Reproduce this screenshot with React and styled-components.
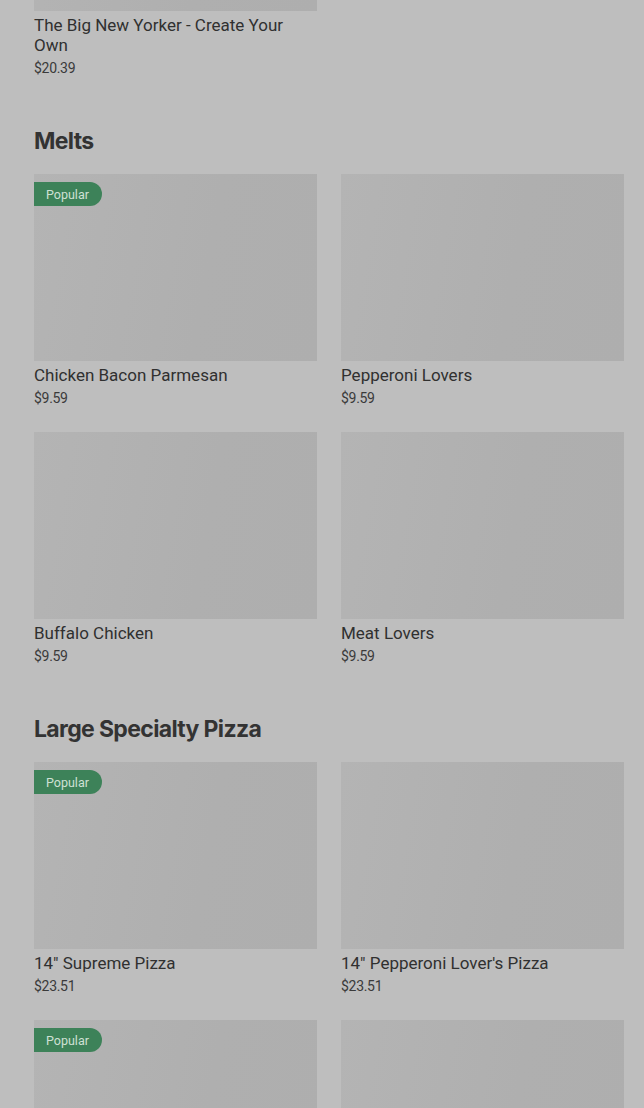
import React from 'react';
import styled, { createGlobalStyle } from 'styled-components';

const GlobalStyle = createGlobalStyle`
  html, body {
    margin: 0;
    padding: 0;
    background: #bebebe;
    overflow: hidden;
  }
  body {
    font-family: Roboto, "Liberation Sans", sans-serif;
    color: #353535;
  }
`;

const Page = styled.main`
  padding: 0 20px 0 34px;
  margin-top: -176px;
`;

const Section = styled.section`
  & + & {
    margin-top: 47px;
  }
`;

const Heading = styled.h2`
  margin: 0 0 17px;
  font-family: Inter, "Liberation Sans", sans-serif;
  font-size: 23px;
  line-height: 32px;
  font-weight: 700;
  letter-spacing: -0.65px;
  color: #333;
`;

const Grid = styled.div`
  display: grid;
  grid-template-columns: 283px 283px;
  column-gap: 24px;
  row-gap: 24px;
`;

const Card = styled.div`
  display: flex;
  flex-direction: column;
`;

const Thumb = styled.div`
  position: relative;
  height: 187px;
  background: linear-gradient(100deg, #b4b4b4 0%, #afafaf 60%, #aeaeae 100%);
`;

const Badge = styled.span`
  position: absolute;
  top: 8px;
  left: 0;
  height: 24px;
  padding: 0 13px 0 12px;
  display: flex;
  align-items: center;
  background: #3d8259;
  color: #cfe0d4;
  font-size: 12.5px;
  border-radius: 0 12px 12px 0;
`;

const Title = styled.div`
  margin-top: 4px;
  font-size: 17px;
  line-height: 20px;
  font-weight: 400;
  color: #303030;
`;

const Price = styled.div`
  margin-top: 3px;
  font-size: 14px;
  line-height: 20px;
  color: #3a3a3a;
  letter-spacing: -0.3px;
`;

const sections = [
  {
    items: [{ name: 'The Big New Yorker - Create Your Own', price: '$20.39' }],
  },
  {
    title: 'Melts',
    items: [
      { name: 'Chicken Bacon Parmesan', price: '$9.59', popular: true },
      { name: 'Pepperoni Lovers', price: '$9.59' },
      { name: 'Buffalo Chicken', price: '$9.59' },
      { name: 'Meat Lovers', price: '$9.59' },
    ],
  },
  {
    title: 'Large Specialty Pizza',
    items: [
      { name: '14" Supreme Pizza', price: '$23.51', popular: true },
      { name: '14" Pepperoni Lover\'s Pizza', price: '$23.51' },
      { name: '14" Cheese Pizza', price: '$21.59', popular: true },
      { name: '14" Meat Lover\'s Pizza', price: '$23.51' },
    ],
  },
];

function ItemCard({ item }) {
  return (
    <Card>
      <Thumb>{item.popular && <Badge>Popular</Badge>}</Thumb>
      <Title>{item.name}</Title>
      <Price>{item.price}</Price>
    </Card>
  );
}

export default function App() {
  return (
    <>
      <GlobalStyle />
      <Page>
        {sections.map((s, i) => (
          <Section key={i}>
            {s.title && <Heading>{s.title}</Heading>}
            <Grid>
              {s.items.map((it) => (
                <ItemCard key={it.name} item={it} />
              ))}
            </Grid>
          </Section>
        ))}
      </Page>
    </>
  );
}
